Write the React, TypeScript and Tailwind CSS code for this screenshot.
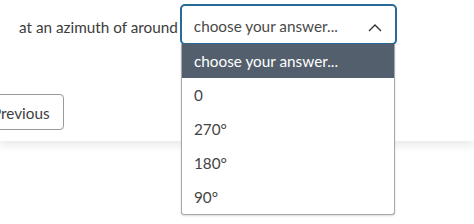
import React from "react";

export default function App() {
  const options = ["0", "270°", "180°", "90°"];
  return (
    <div className="relative w-[474px] h-[224px] overflow-hidden bg-white font-['Lato',sans-serif] text-[15.3px]">
      <div className="h-[141px] bg-white shadow-[0_5px_8px_rgba(0,0,0,0.08)] pt-[4px]">
        <div className="flex items-center pl-[19px]">
          <span className="text-[#3d3d3d] mr-[2px] pt-[5px]">at an azimuth of around</span>
          <div className="relative">
            <div className="w-[217px] h-[41px] rounded-[5px] border-2 border-[#2a6a98] bg-white flex items-center justify-between pl-[12px] pr-[13px] pt-[4px] text-[#4a4a4a]">
              <span>choose your answer...</span>
              <svg width="14" height="9" viewBox="0 0 14 9" fill="none" className="mt-[1px]">
                <path d="M1 8L7 2L13 8" stroke="#333" strokeWidth="1.4" />
              </svg>
            </div>
          </div>
        </div>
        <div className="mt-[49px] ml-[-22px]">
          <button className="h-[36px] px-[13px] pt-[2px] rounded-[4px] border border-[#9a9a9a] bg-white text-[#3d3d3d]">
            Previous
          </button>
        </div>
      </div>
      <div className="absolute left-[181px] top-[44px] w-[214px] border border-[#a8a8a8] border-t-0 rounded-b-[3px] bg-white shadow-[0_1px_2px_rgba(0,0,0,0.15)]">
        <div className="h-[34px] bg-[#535f6c] text-white flex items-center pl-[12px]">
          choose your answer...
        </div>
        {options.map((o) => (
          <div key={o} className="h-[34px] flex items-center pl-[12px] text-[#444]">
            {o}
          </div>
        ))}
      </div>
    </div>
  );
}
